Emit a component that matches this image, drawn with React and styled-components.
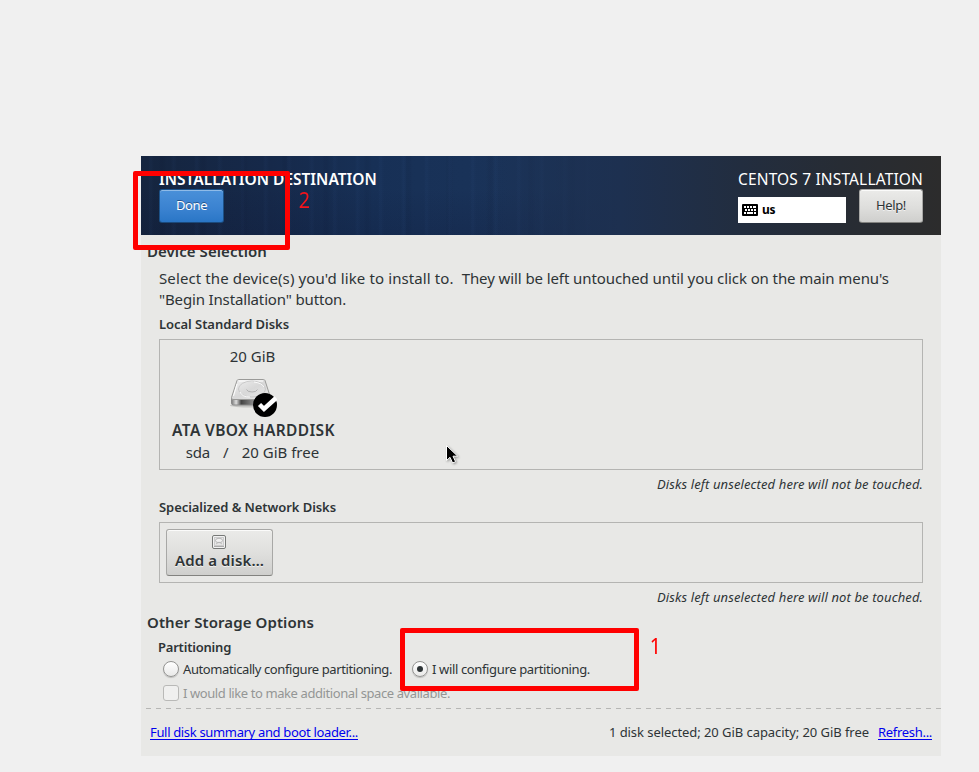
import React from "react";
import styled, { createGlobalStyle } from "styled-components";

const Global = createGlobalStyle`
  body { margin: 0; background: #f0f0f0; }
  * { box-sizing: border-box; }
`;

const Page = styled.div`
  position: relative;
  width: 979px;
  height: 772px;
  padding: 156px 0 0 141px;
  overflow: hidden;
  background: #f0f0f0;
  font-family: "Noto Sans", sans-serif;
  color: #2e3436;
`;

const Installer = styled.main`
  display: flex;
  flex-direction: column;
  width: 800px;
  height: 600px;
  background: #e8e8e6;
`;

const Line = styled.div`
  white-space: pre;
  font-size: ${(p) => (p.$small ? 13 : 15)}px;
  line-height: ${(p) => (p.$small ? 18 : 20)}px;
  height: ${(p) => (p.$small ? 18 : 20)}px;
  font-weight: ${(p) => (p.$bold ? 600 : 400)};
  font-style: ${(p) => (p.$italic ? "italic" : "normal")};
  letter-spacing: ${(p) => p.$track || 0}px;
`;

const CapsLine = styled(Line)`
  font-size: 15.5px;
  line-height: 22px;
`;

const Header = styled.header`
  display: flex;
  justify-content: space-between;
  height: 79px;
  padding: 12px 18px 0;
  color: #fff;
  background:
    linear-gradient(90deg, transparent 340px, #1d3050 480px, #222d3f 600px, #272c34 700px, #2c2c2c 800px),
    repeating-linear-gradient(90deg, transparent 0 7px, rgba(80, 130, 210, 0.035) 9px 10px, transparent 13px 23px),
    repeating-linear-gradient(90deg, transparent 0 17px, rgba(0, 0, 20, 0.05) 20px 22px, transparent 26px 41px),
    linear-gradient(180deg, transparent 40%, rgba(10, 15, 45, 0.16)),
    linear-gradient(90deg, #15253f 0, #16294a 130px, #173056 230px, #1a3359 370px, #1c3050 800px);
`;

const HeaderSide = styled.div`
  display: flex;
  flex-direction: column;
  align-items: flex-start;
  gap: 1px;
`;

const HeaderTools = styled.div`
  display: flex;
  gap: 13px;
`;

const Button = styled.button`
  display: flex;
  align-items: center;
  justify-content: center;
  width: ${(p) => p.$width}px;
  height: 34px;
  padding: 0 0 2px;
  border: 1px solid ${(p) => (p.$primary ? "#1c5187" : "#a8a8a6")};
  border-bottom-color: ${(p) => (p.$primary ? "#1b4a7c" : "#82827f")};
  border-radius: 3px;
  background: ${(p) =>
    p.$primary ? "linear-gradient(#4a90d9, #3a82d0 60%, #2a76c6)" : "linear-gradient(#ebebe9, #dededc 55%, #cfcfcd)"};
  box-shadow: inset 0 1px ${(p) => (p.$primary ? "#8fbbe8" : "#fbfbfa")};
  color: ${(p) => (p.$primary ? "#fff" : "#2e3436")};
  text-shadow: ${(p) => (p.$primary ? "0 -1px rgba(20,50,90,.6)" : "0 1px rgba(255,255,255,.7)")};
  font: 13px/18px "Noto Sans", sans-serif;
  letter-spacing: -0.38px;
`;

const Keyboard = styled.div`
  display: flex;
  align-items: center;
  gap: 4px;
  width: 108px;
  height: 26px;
  margin-top: 8px;
  padding-left: 4px;
  background: #fff;
  color: #000;
  font-size: 12px;
  font-weight: 700;
  letter-spacing: -0.4px;
`;

const LayoutName = styled.span`
  padding-bottom: 2px;
`;

const Section = styled.section`
  padding: ${(p) => p.$top}px 18px 0 6px;
`;

const Group = styled.div`
  padding-left: ${(p) => p.$indent || 12}px;
`;

const Intro = styled.p`
  margin: 7px 0 5px;
  white-space: pre-wrap;
  font-size: 15px;
  line-height: 21px;
`;

const Tracked = styled.span`
  letter-spacing: ${(p) => p.$track}px;
`;

const DiskBox = styled.div`
  display: flex;
  align-items: flex-start;
  height: ${(p) => p.$height}px;
  margin: 6px 0 5px;
  padding: 6px;
  border: 1px solid #b4b4b2;
`;

const Note = styled(Line)`
  margin-bottom: 5px;
  text-align: right;
`;

const Disk = styled.div`
  display: flex;
  flex-direction: column;
  align-items: center;
  width: 173px;
`;

const DiskName = styled(CapsLine)`
  padding-left: 2px;
`;

const DiskIcon = styled.svg`
  display: block;
  width: 50px;
  height: 44px;
  margin: 9px 2px 0 0;
`;

const DiskDetails = styled.div`
  display: flex;
  gap: 13px;
  margin-top: 3px;
`;

const AddDisk = styled(Button)`
  flex-direction: column;
  justify-content: flex-start;
  gap: 1px;
  height: 47px;
  padding: 5px 0 0;
  svg {
    margin-right: 1px;
  }
`;

const Choices = styled.div`
  display: flex;
  align-items: center;
  height: 18px;
  margin-top: ${(p) => p.$top}px;
  padding-left: 5px;
  gap: 20px;
`;

const GroupTitle = styled(Line)`
  margin-top: 6px;
`;

const Choice = styled.label`
  display: flex;
  align-items: center;
  gap: 4px;
  color: ${(p) => (p.$disabled ? "#949695" : "inherit")};
`;

const Radio = styled.span`
  display: grid;
  place-items: center;
  width: 16px;
  height: 16px;
  border: 1px solid #949492;
  border-radius: 50%;
  background: linear-gradient(#fff, #e9e9e8);
  box-shadow: 0 1px 1px rgba(0, 0, 0, 0.18);
  &::after {
    content: "";
    width: 6px;
    height: 6px;
    border-radius: 50%;
    background: ${(p) => (p.$checked ? "#2e3436" : "transparent")};
  }
`;

const Checkbox = styled.span`
  width: 16px;
  height: 16px;
  border: 1px solid #b9b9b7;
  border-radius: 3px;
  background: #f0f0ef;
`;

const Divider = styled.div`
  height: 1px;
  margin: 6px 0 0 5px;
  background: repeating-linear-gradient(90deg, #b6b6b4 0 5px, transparent 5px 10px);
`;

const Footer = styled.footer`
  display: flex;
  justify-content: space-between;
  padding: 14px 9px 0;
`;

const Summary = styled.div`
  display: flex;
  gap: 9px;
`;

const Link = styled(Line)`
  color: #0000ee;
  height: 17px;
  border-bottom: 1px solid #0000ee;
`;

const Marker = styled.div`
  position: absolute;
  left: ${(p) => p.$x}px;
  top: ${(p) => p.$y}px;
  width: ${(p) => p.$w}px;
  height: ${(p) => p.$h}px;
  border: 5px solid #f00;
  border-radius: 2px;
`;

const MarkerNumber = styled.div`
  position: absolute;
  left: ${(p) => p.$x}px;
  top: ${(p) => p.$y}px;
  color: ${(p) => p.$color};
  font-size: 22px;
  line-height: 20px;
  transform: scaleX(0.9);
`;

const Pointer = styled.svg`
  position: absolute;
  left: 445px;
  top: 444px;
  width: 15px;
  height: 22px;
  filter: drop-shadow(1px 1px 1px rgba(0, 0, 0, 0.35));
`;

const KeyboardIcon = () => (
  <svg width="16" height="12" viewBox="0 0 16 12">
    <rect width="16" height="12" rx="1" fill="#000" />
    <path
      d="M2 3h2M5 3h2M8 3h2M11 3h3M3 6h2M6 6h2M9 6h2M12 6h2M2 9h2M5 9h6M12 9h2"
      stroke="#fff"
      strokeWidth="2"
      shapeRendering="crispEdges"
    />
  </svg>
);

const HardDisk = () => (
  <DiskIcon viewBox="0 0 50 44">
    <defs>
      <linearGradient id="lid" x1="0" y1="0" x2="1" y2="1">
        <stop offset="0" stopColor="#f2f2f2" />
        <stop offset=".5" stopColor="#d8d8d8" />
        <stop offset="1" stopColor="#ececec" />
      </linearGradient>
      <linearGradient id="edge">
        <stop offset="0" stopColor="#777" />
        <stop offset=".12" stopColor="#ddd" />
        <stop offset=".25" stopColor="#444" />
        <stop offset=".7" stopColor="#aaa" />
        <stop offset="1" stopColor="#555" />
      </linearGradient>
    </defs>
    <g transform="translate(1 0)">
      <ellipse cx="23" cy="30.5" rx="21" ry="2" fill="#000" opacity=".15" />
      <path d="M3.5 23v5q0 2 2 2h35q2 0 2-2v-5z" fill="url(#edge)" stroke="#888" />
      <path d="M10.5 4.5h25q1 0 1.5 1l5.500 17q.5 2-1.500 2H5q-2 0-1.500-2L9 5.500q.5-1 1.500-1z" fill="url(#lid)" stroke="#9a9a98" />
      <path d="M11 6h24M9 9l-3.500 12" stroke="#fff" fill="none" />
      <ellipse cx="24" cy="14" rx="13.500" ry="8" fill="none" stroke="#c2c2c2" strokeWidth=".8" />
      <path d="M12 17q2 5 10 5M26 7q8 1 10 5" fill="none" stroke="#fafafa" />
      <path d="M18.500 14.500q1 2.500 5.500 2.500t5.500-2.500" fill="none" stroke="#a5a5a5" strokeWidth=".8" />
    </g>
    <circle cx="38" cy="30" r="12" fill="#000" />
    <path d="M32.500 29.500L37 34l12-11" fill="none" stroke="#fff" strokeWidth="4.500" />
  </DiskIcon>
);

const SmallDisk = () => (
  <svg width="14" height="14" viewBox="0 0 14 14">
    <rect x=".5" y=".5" width="13" height="13" rx="1.5" fill="#f2f2f2" stroke="#777977" />
    <path d="M2 11.5h10" stroke="#aaa" />
    <rect x="2.5" y="2.5" width="9" height="8" fill="#e6e6e6" stroke="#ccc" />
    <ellipse cx="7" cy="5.5" rx="3.5" ry="2.2" fill="#f1f1f1" stroke="#aaa" strokeWidth=".8" />
    <path d="M4 9l3-2 3 2" stroke="#b5b5b5" fill="none" strokeWidth=".8" />
  </svg>
);

export default function App() {
  return (
    <Page>
      <Global />
      <Installer>
        <Header>
          <HeaderSide>
            <CapsLine $bold>INSTALLATION DESTINATION</CapsLine>
            <Button $primary $width={65}>Done</Button>
          </HeaderSide>
          <HeaderSide>
            <CapsLine $track={0.15}>CENTOS 7 INSTALLATION</CapsLine>
            <HeaderTools>
              <Keyboard><KeyboardIcon /><LayoutName>us</LayoutName></Keyboard>
              <Button $width={64}>Help!</Button>
            </HeaderTools>
          </HeaderSide>
        </Header>

        <Section $top={6}>
          <Line $bold $track={0.07}>Device Selection</Line>
          <Group>
            <Intro>
              <Tracked $track={0.11}>{"Select the device(s) you'd like to install to.  "}</Tracked>
              <Tracked $track={-0.09}>{"They will be left untouched until you click on the main menu's\n"}</Tracked>
              <Tracked $track={-0.15}>{'"Begin Installation" button.'}</Tracked>
            </Intro>
            <Line $small $bold $track={-0.047}>Local Standard Disks</Line>
            <DiskBox $height={131}>
              <Disk>
                <Line>20 GiB</Line>
                <HardDisk />
                <DiskName $bold $track={0.38}>ATA VBOX HARDDISK</DiskName>
                <DiskDetails>
                  <Line $track={-0.2}>sda</Line>
                  <Line>/</Line>
                  <Line>20 GiB free</Line>
                </DiskDetails>
              </Disk>
            </DiskBox>
            <Note $small $italic $track={0.11}>Disks left unselected here will not be touched.</Note>
            <Line $small $bold $track={-0.068}>{"Specialized & Network Disks"}</Line>
            <DiskBox $height={61}>
              <AddDisk $width={107}>
                <SmallDisk />
                <Line $bold $track={0.11}>Add a disk…</Line>
              </AddDisk>
            </DiskBox>
            <Note $small $italic $track={0.11}>Disks left unselected here will not be touched.</Note>
          </Group>
        </Section>

        <Section $top={1}>
          <Line $bold $track={0.09}>Other Storage Options</Line>
          <Group $indent={11}>
            <GroupTitle $small $bold $track={-0.21}>Partitioning</GroupTitle>
            <Choices $top={4}>
              <Choice>
                <Radio />
                <Line $small $track={-0.405}>Automatically configure partitioning.</Line>
              </Choice>
              <Choice>
                <Radio $checked />
                <Line $small $track={-0.36}>I will configure partitioning.</Line>
              </Choice>
            </Choices>
            <Choices $top={6}>
              <Choice $disabled>
                <Checkbox />
                <Line $small $track={-0.406}>I would like to make additional space available.</Line>
              </Choice>
            </Choices>
          </Group>
        </Section>

        <Divider />
        <Footer>
          <Link $small $track={-0.336}>Full disk summary and boot loader...</Link>
          <Summary>
            <Line $small $track={-0.061}>1 disk selected; 20 GiB capacity; 20 GiB free</Line>
            <Link $small $track={-0.3}>Refresh...</Link>
          </Summary>
        </Footer>
      </Installer>

      <Pointer viewBox="0 0 15 22">
        <path d="M1.5 1.5v15l3.500-3.200 2.600 5.700 3-1.300-2.600-5.500h4.700z" fill="#000" stroke="#fff" />
      </Pointer>
      <Marker $x={133} $y={171} $w={157} $h={79} />
      <MarkerNumber $x={298} $y={189} $color="#f5141c">2</MarkerNumber>
      <Marker $x={400} $y={628} $w={239} $h={63} />
      <MarkerNumber $x={649} $y={635} $color="#f00">1</MarkerNumber>
    </Page>
  );
}
